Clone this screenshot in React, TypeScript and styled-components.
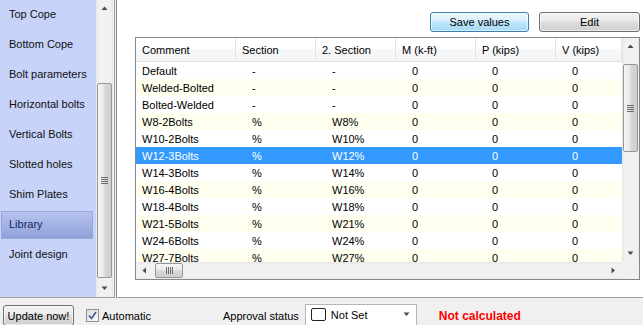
import React from 'react';
import styled, { createGlobalStyle, css } from 'styled-components';

const Global = createGlobalStyle`
  html, body { margin: 0; padding: 0; width: 643px; height: 325px; overflow: hidden; background: #f0f0f0; }
  body { font-family: "Liberation Sans", Arial, sans-serif; font-size: 11px; color: #000; }
  #root { width: 643px; height: 325px; }
`;

const Window = styled.div`
  width: 643px;
  height: 325px;
  display: flex;
  flex-direction: column;
  overflow: hidden;
  background: #f0f0f0;
`;

const Main = styled.div`
  display: flex;
  height: 298px;
  flex: none;
`;

const Sidebar = styled.div`
  width: 115px;
  box-sizing: border-box;
  display: flex;
  border-right: 1px solid #a0a0a0;
  border-bottom: 1px solid #a0a0a0;
  padding-right: 1px;
  background: #f0f0f0;
`;

const NavList = styled.ul`
  list-style: none;
  margin: 0;
  padding: 0;
  width: 96px;
  background: #c7d3f8;
  overflow: hidden;
  display: flex;
  flex-direction: column;
`;

const NavItem = styled.li<{ $active?: boolean }>`
  height: 28px;
  margin: 1px 3px 1px 1px;
  box-sizing: border-box;
  border: 1px solid transparent;
  padding: 0 0 2px 7px;
  display: flex;
  align-items: center;
  white-space: nowrap;
  color: #111;
  flex: none;
  ${(p) =>
    p.$active &&
    css`
      border-color: #98a6d8;
      background: linear-gradient(#b7c4ef, #8fa1d9);
      color: #1a2766;
    `}
`;

const Track = styled.div<{ $vertical?: boolean }>`
  display: flex;
  flex-direction: ${(p) => (p.$vertical ? 'column' : 'row')};
  background: ${(p) =>
    p.$vertical
      ? 'linear-gradient(to right, #e6e6e6, #f1f1f1 15%, #f1f1f1 85%, #e9e9e9)'
      : 'linear-gradient(to bottom, #e6e6e6, #f1f1f1 15%, #f1f1f1 85%, #e9e9e9)'};
  ${(p) => (p.$vertical ? 'width: 17px;' : 'height: 17px;')}
  flex: none;
  overflow: hidden;
`;

const ArrowBox = styled.div`
  width: 17px;
  height: 17px;
  flex: none;
  display: flex;
  align-items: center;
  justify-content: center;
`;

const Spacer = styled.div`
  flex: 1;
`;

const Thumb = styled.div<{ $vertical?: boolean; $offset: number; $size: number }>`
  flex: none;
  box-sizing: border-box;
  border: 1px solid #989898;
  border-radius: 2px;
  display: flex;
  align-items: center;
  justify-content: center;
  ${(p) =>
    p.$vertical
      ? css`
          margin: ${p.$offset}px 1px 0 1px;
          height: ${p.$size}px;
          background: linear-gradient(to right, #f6f6f6, #e8e8e8 45%, #d6d6d6 55%, #cfcfcf);
        `
      : css`
          margin: 1px 0 1px ${p.$offset}px;
          width: ${p.$size}px;
          background: linear-gradient(to bottom, #f6f6f6, #e8e8e8 45%, #d6d6d6 55%, #cfcfcf);
        `}
`;

const Arrow: React.FC<{ dir: 'up' | 'down' | 'left' | 'right' }> = ({ dir }) => {
  const pts: Record<string, string> = {
    up: '0.5,4 3.5,0.5 6.5,4',
    down: '0.5,0.5 3.5,4 6.5,0.5',
    left: '4,0.5 0.5,3.5 4,6.5',
    right: '0.5,0.5 4,3.5 0.5,6.5',
  };
  const vert = dir === 'up' || dir === 'down';
  return (
    <svg width={vert ? 7 : 5} height={vert ? 5 : 7} viewBox={vert ? '0 0 7 5' : '0 0 5 7'}>
      <polygon points={pts[dir]} fill="#4a4a4a" />
    </svg>
  );
};

const Grip: React.FC<{ vertical?: boolean }> = ({ vertical }) =>
  vertical ? (
    <svg width="7" height="7" viewBox="0 0 7 7">
      {[0, 2, 4, 6].map((y) => (
        <line key={y} x1="0" y1={y + 0.5} x2="7" y2={y + 0.5} stroke="#6d6d6d" strokeWidth="1" />
      ))}
    </svg>
  ) : (
    <svg width="7" height="7" viewBox="0 0 7 7">
      {[0, 2, 4, 6].map((x) => (
        <line key={x} x1={x + 0.5} y1="0" x2={x + 0.5} y2="7" stroke="#6d6d6d" strokeWidth="1" />
      ))}
    </svg>
  );

const ScrollBar: React.FC<{ vertical?: boolean; offset: number; size: number }> = ({ vertical, offset, size }) => (
  <Track $vertical={vertical}>
    <ArrowBox>
      <Arrow dir={vertical ? 'up' : 'left'} />
    </ArrowBox>
    <Thumb $vertical={vertical} $offset={offset} $size={size}>
      <Grip vertical={vertical} />
    </Thumb>
    <Spacer />
    <ArrowBox>
      <Arrow dir={vertical ? 'down' : 'right'} />
    </ArrowBox>
  </Track>
);

const Panel = styled.div`
  flex: 1;
  margin-left: 1px;
  background: #fff;
  border-left: 1px solid #8c8c8c;
  border-bottom: 1px solid #a0a0a0;
  box-sizing: border-box;
  padding: 12px 3px 0 18px;
  display: flex;
  flex-direction: column;
  gap: 5px;
`;

const ButtonRow = styled.div`
  display: flex;
  justify-content: flex-end;
  gap: 10px;
  height: 20px;
`;

const Button = styled.button<{ $focused?: boolean; $w: number; $h?: number }>`
  width: ${(p) => p.$w}px;
  height: ${(p) => p.$h ?? 20}px;
  box-sizing: border-box;
  padding: 0;
  font-family: "Liberation Sans", Arial, sans-serif;
  font-size: 11px;
  color: #000;
  border-radius: 3px;
  border: 1px solid ${(p) => (p.$focused ? '#3c7fb1' : '#707070')};
  background: ${(p) =>
    p.$focused
      ? 'linear-gradient(#eaf6fd 0%, #d9f0fc 45%, #bee6fd 50%, #a7d9f5 100%)'
      : 'linear-gradient(#f2f2f2 0%, #ebebeb 45%, #dddddd 50%, #cfcfcf 100%)'};
  box-shadow: inset 0 0 0 1px ${(p) => (p.$focused ? 'rgba(255,255,255,0.55)' : 'rgba(255,255,255,0.6)')};
  display: flex;
  align-items: center;
  justify-content: center;
  flex: none;
`;

const TableBox = styled.div`
  width: 505px;
  height: 243px;
  box-sizing: border-box;
  border: 1px solid #828790;
  display: grid;
  grid-template-columns: 1fr 17px;
  grid-template-rows: 1fr 17px;
  background: #fff;
`;

const Viewport = styled.div`
  overflow: hidden;
  display: flex;
  flex-direction: column;
`;

const COLS = '100px 80px 80px 80px 80px 66px';

const HeaderRow = styled.div`
  display: grid;
  grid-template-columns: ${COLS};
  height: 24px;
  flex: none;
  box-sizing: border-box;
  border-bottom: 1px solid #e2e3e5;
  background: linear-gradient(#ffffff 0%, #ffffff 45%, #f7f8f9 50%, #f3f4f6 100%);
`;

const HeaderCell = styled.div`
  display: flex;
  align-items: center;
  padding-left: 6px;
  border-right: 1px solid #e3e4e6;
  white-space: nowrap;
  overflow: hidden;
`;

const Row = styled.div<{ $alt?: boolean; $selected?: boolean }>`
  display: grid;
  grid-template-columns: ${COLS};
  height: 17px;
  flex: none;
  background: ${(p) => (p.$selected ? '#3399ff' : p.$alt ? '#ffffef' : '#ffffff')};
  color: ${(p) => (p.$selected ? '#fff' : '#000')};
`;

const Cell = styled.div<{ $first?: boolean }>`
  display: flex;
  align-items: center;
  padding-left: ${(p) => (p.$first ? 6 : 16)}px;
  white-space: nowrap;
  overflow: hidden;
`;

const Corner = styled.div`
  background: #f0f0f0;
`;

const StatusBar = styled.div`
  display: flex;
  align-items: center;
  height: 23px;
  padding: 6px 0 0 3px;
  flex: none;
`;

const CheckGroup = styled.label`
  display: flex;
  align-items: center;
  gap: 3px;
  margin-left: 12px;
  width: 137px;
`;

const CheckBox = styled.span`
  width: 13px;
  height: 13px;
  box-sizing: border-box;
  border: 1px solid #8e8f8f;
  background: linear-gradient(135deg, #dcdcdc, #fbfbfb);
  display: flex;
  align-items: center;
  justify-content: center;
`;

const StatusLabel = styled.span`
  white-space: nowrap;
`;

const Dropdown = styled.div`
  margin-left: 6px;
  width: 112px;
  height: 23px;
  box-sizing: border-box;
  border: 1px solid #b5b5b5;
  background: #fff;
  display: flex;
  align-items: center;
  padding: 0 6px 2px 5px;
  gap: 5px;
`;

const Swatch = styled.span`
  width: 15px;
  height: 13px;
  box-sizing: border-box;
  border: 1px solid #222;
  border-radius: 2px;
  background: #fff;
  flex: none;
`;

const DropText = styled.span`
  flex: 1;
  color: #000;
`;

const Warning = styled.span`
  margin-left: 22px;
  color: #ff0000;
  font-weight: bold;
  font-size: 12px;
  white-space: nowrap;
`;

const navItems = [
  'Top Cope',
  'Bottom Cope',
  'Bolt parameters',
  'Horizontal bolts',
  'Vertical Bolts',
  'Slotted holes',
  'Shim Plates',
  'Library',
  'Joint design',
];

const headers = ['Comment', 'Section', '2. Section', 'M (k-ft)', 'P (kips)', 'V (kips)'];

const rows: [string, string, string][] = [
  ['Default', '-', '-'],
  ['Welded-Bolted', '-', '-'],
  ['Bolted-Welded', '-', '-'],
  ['W8-2Bolts', '%', 'W8%'],
  ['W10-2Bolts', '%', 'W10%'],
  ['W12-3Bolts', '%', 'W12%'],
  ['W14-3Bolts', '%', 'W14%'],
  ['W16-4Bolts', '%', 'W16%'],
  ['W18-4Bolts', '%', 'W18%'],
  ['W21-5Bolts', '%', 'W21%'],
  ['W24-6Bolts', '%', 'W24%'],
  ['W27-7Bolts', '%', 'W27%'],
];

export default function App() {
  return (
    <>
      <Global />
      <Window>
        <Main>
          <Sidebar>
            <NavList>
              {navItems.map((n) => (
                <NavItem key={n} $active={n === 'Library'}>
                  {n}
                </NavItem>
              ))}
            </NavList>
            <ScrollBar vertical offset={66} size={195} />
          </Sidebar>
          <Panel>
            <ButtonRow>
              <Button $focused $w={99}>Save values</Button>
              <Button $w={101}>Edit</Button>
            </ButtonRow>
            <TableBox>
              <Viewport>
                <HeaderRow>
                  {headers.map((h) => (
                    <HeaderCell key={h}>{h}</HeaderCell>
                  ))}
                </HeaderRow>
                {rows.map((r, i) => (
                  <Row key={r[0]} $alt={i % 2 === 1} $selected={r[0] === 'W12-3Bolts'}>
                    <Cell $first>{r[0]}</Cell>
                    <Cell>{r[1]}</Cell>
                    <Cell>{r[2]}</Cell>
                    <Cell>0</Cell>
                    <Cell>0</Cell>
                    <Cell>0</Cell>
                  </Row>
                ))}
              </Viewport>
              <ScrollBar vertical offset={9} size={88} />
              <ScrollBar offset={2} size={28} />
              <Corner />
            </TableBox>
          </Panel>
        </Main>
        <StatusBar>
          <Button $w={71} $h={21}>Update now!</Button>
          <CheckGroup>
            <CheckBox>
              <svg width="9" height="9" viewBox="0 0 9 9">
                <path d="M1 4.5 L3.5 7.5 L8 1" fill="none" stroke="#3d5a9c" strokeWidth="1.6" />
              </svg>
            </CheckBox>
            <StatusLabel>Automatic</StatusLabel>
          </CheckGroup>
          <StatusLabel>Approval status</StatusLabel>
          <Dropdown>
            <Swatch />
            <DropText>Not Set</DropText>
            <Arrow dir="down" />
          </Dropdown>
          <Warning>Not calculated</Warning>
        </StatusBar>
      </Window>
    </>
  );
}
